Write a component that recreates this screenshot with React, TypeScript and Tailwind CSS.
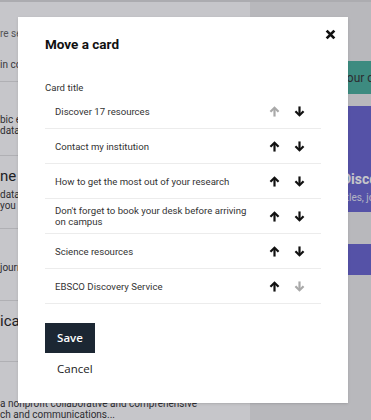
import { useState } from "react";

type Card = { id: number; title: string };

const initialCards: Card[] = [
  { id: 1, title: "Discover 17 resources" },
  { id: 2, title: "Contact my institution" },
  { id: 3, title: "How to get the most out of your research" },
  { id: 4, title: "Don't forget to book your desk before arriving on campus" },
  { id: 5, title: "Science resources" },
  { id: 6, title: "EBSCO Discovery Service" },
];

const ArrowIcon = ({ dir }: { dir: "up" | "down" }) => (
  <svg
    width="11"
    height="11"
    viewBox="0 0 10 10"
    fill="none"
    stroke="currentColor"
    strokeWidth="2"
    className={dir === "down" ? "rotate-180" : ""}
  >
    <path d="M5 9.6V1.8" />
    <path d="M1.3 5.3L5 1.6l3.7 3.7" />
  </svg>
);

// the page that sits behind the dimmed overlay
const BackgroundPage = () => (
  <div className="flex h-full flex-col">
    <div className="h-[3px] bg-[#dcdcdc]" />
    <div className="flex flex-1">
      <div className="w-[250px] overflow-hidden whitespace-nowrap bg-white text-[10px] text-[#333]">
        <div className="h-[80px] border-b border-[#e2e2e2] pt-[24px]">
          <p className="text-[#666]">re searching across our collections</p>
          <p className="mt-[16px] text-[#444]">in collections and databases</p>
        </div>
        <div className="h-[74px] border-b border-[#e2e2e2] pt-[32px] leading-[11px]">
          <p>bic e-books and journals</p>
          <p>data and statistics</p>
        </div>
        <div className="h-[73px] border-b border-[#e2e2e2] pt-[10px] leading-[11px]">
          <p className="text-[15px] leading-[20px] text-[#222]">ne databases</p>
          <p className="mt-[3px]">data sources for</p>
          <p>you and your team</p>
        </div>
        <div className="h-[72px] border-b border-[#e2e2e2] pt-[31px]">
          <p>journals and articles</p>
        </div>
        <div className="h-[61px] border-b border-[#e2e2e2] pt-[10px]">
          <p className="text-[15px] leading-[20px] text-[#222]">ica</p>
        </div>
        <div className="pt-[36px] leading-[11px]">
          <p>a nonprofit collaborative and comprehensive</p>
          <p>ch and communications...</p>
        </div>
      </div>
      <div className="flex-1 overflow-hidden whitespace-nowrap bg-[#ececec] pl-[8px]">
        <div className="mt-[59px] flex h-[33px] items-center bg-[#48b19c] pl-[82px] text-[12px] text-[#333]">
          Your collections
        </div>
        <div className="mt-[12px] h-[106px] bg-[#6865d1] pl-[84px] pt-[64px] text-white">
          <p className="text-[14px] font-bold leading-[18px]">Discover</p>
          <p className="mt-[2px] -ml-[2px] text-[10px] text-[#e4e4f6]">titles, journals</p>
        </div>
        <div className="mt-[32px] h-[31px] bg-[#6865d1]" />
      </div>
    </div>
  </div>
);

export default function App() {
  const [cards, setCards] = useState(initialCards);

  const move = (index: number, delta: number) => {
    const next = [...cards];
    const target = index + delta;
    if (target < 0 || target >= next.length) return;
    [next[index], next[target]] = [next[target], next[index]];
    setCards(next);
  };

  return (
    <div className="relative h-[420px] w-[371px] overflow-hidden font-['Roboto',sans-serif]">
      <BackgroundPage />

      {/* Overlay */}
      <div className="absolute inset-0 bg-[#1c1c2c]/25" />

      {/* Modal */}
      <div className="absolute left-[18px] top-[17px] h-[386px] w-[330px] bg-white px-[27px] pt-[18px] shadow-sm">
        <button className="absolute right-[6px] top-[5px] flex h-6 w-6 items-center justify-center text-[#111]">
          <svg width="11" height="11" viewBox="0 0 10 10" stroke="currentColor" strokeWidth="2.5">
            <path d="M1.5 1.5L8.5 8.5M8.5 1.5L1.5 8.5" />
          </svg>
        </button>

        <h2 className="text-[13.5px] font-bold leading-[18px] text-[#111]">Move a card</h2>

        <p className="mt-[28px] text-[9.6px] leading-[13px] text-[#333]">Card title</p>

        <ul>
          {cards.map((card, i) => (
            <li key={card.id} className="flex h-[35px] items-center border-b border-[#ececec]">
              <span className="flex-1 pl-[10px] pr-[14px] text-[9.6px] leading-[11px] text-[#333]">
                {card.title}
              </span>
              <div className="flex gap-[1px] pr-[10px]">
                <button
                  onClick={() => move(i, -1)}
                  disabled={i === 0}
                  className={`flex h-[34px] w-6 items-center justify-center ${i === 0 ? "text-[#a9a9a9]" : "text-[#111]"}`}
                >
                  <ArrowIcon dir="up" />
                </button>
                <button
                  onClick={() => move(i, 1)}
                  disabled={i === cards.length - 1}
                  className={`flex h-[34px] w-6 items-center justify-center ${i === cards.length - 1 ? "text-[#a9a9a9]" : "text-[#111]"}`}
                >
                  <ArrowIcon dir="down" />
                </button>
              </div>
            </li>
          ))}
        </ul>

        <div className="mt-[19px] flex flex-col items-start font-['Open_Sans',sans-serif] text-[11.5px]">
          <button className="h-[30px] w-[50px] bg-[#1c2733] font-semibold text-white">Save</button>
          <button className="mt-[1px] h-[30px] px-3 text-[#222]">Cancel</button>
        </div>
      </div>
    </div>
  );
}
